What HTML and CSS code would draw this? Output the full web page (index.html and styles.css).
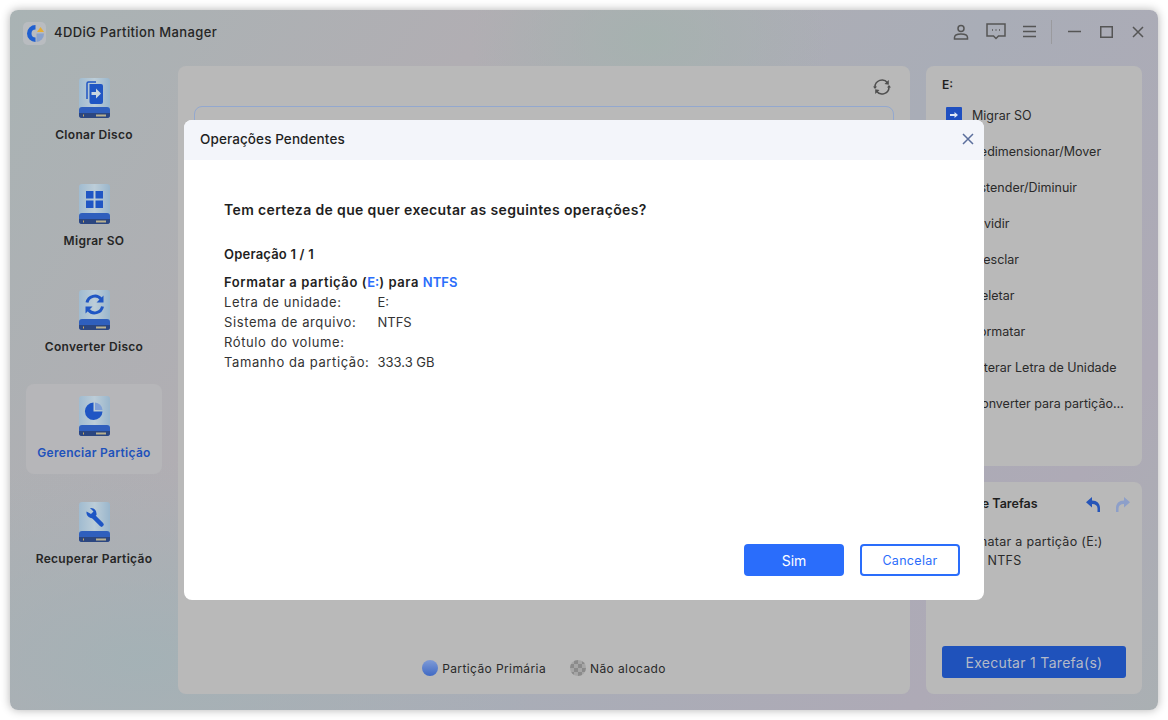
FILE: index.html
```html
<!DOCTYPE html>
<html lang="pt">
<head>
  <meta charset="UTF-8" />
  <title>4DDiG Partition Manager</title>
  <link rel="stylesheet" href="styles.css">
</head>
<body>
  <svg class="defs" width="0" height="0">
    <defs>
      <linearGradient id="diskBody" x1="0" x2="1" y1="0" y2="0">
        <stop offset="0" stop-color="#a0bbd0" />
        <stop offset="0.5" stop-color="#bccdd8" />
        <stop offset="1" stop-color="#9ab6cc" />
      </linearGradient>
      <symbol id="disk" viewBox="0 0 31 40">
        <rect width="31" height="36" rx="3" fill="url(#diskBody)" />
        <rect y="29" width="31" height="11" rx="3" fill="#2f5fbd" />
        <path d="M0 35h31v2a3 3 0 0 1-3 3H3a3 3 0 0 1-3-3z" fill="#2b4680" />
        <rect x="4" y="36.500" width="1" height="2" fill="#c9a860" />
        <rect x="17" y="36.500" width="10" height="2" fill="#b9b08e" />
      </symbol>
    </defs>
  </svg>

  <div class="window">
    <header class="titlebar">
      <div class="brand">
        <span class="logo">
          <svg width="23" height="23" viewBox="0 0 23 23">
            <path d="M12.500 3a8.500 8.500 0 1 0 0 17v-4.500a4 4 0 0 1 0-8z" fill="#1f5fd0" />
            <path d="M13.500 11.500H21a8.500 8.500 0 0 1-7.500 8.500z" fill="#8aa2cc" />
            <path d="M14 10l3.500-5 3.500 5z" fill="#e5ad35" />
          </svg>
        </span>
        <span class="app-name">4DDiG Partition Manager</span>
      </div>
      <div class="controls">
        <svg class="ctl ctl-user" width="16" height="16" viewBox="0 0 16 16"><circle cx="8" cy="4.500" r="3" /><path d="M1.500 15v-1.500c0-2 2-3.500 6.500-3.500s6.500 1.500 6.500 3.500V15z" /></svg>
        <svg class="ctl ctl-chat" width="20" height="17" viewBox="0 0 20 17"><path d="M1 1h18v12h-6.500L10 15.500 7.500 13H1z" /><path d="M6 7h1M9.500 7h1M13 7h1" /></svg>
        <svg class="ctl ctl-menu" width="13" height="13" viewBox="0 0 13 13"><path d="M0 1.500h13M0 6.500h13M0 11.500h13" /></svg>
        <span class="divider"></span>
        <svg class="ctl ctl-min" width="13" height="13" viewBox="0 0 13 13"><path d="M0 6.500h13" /></svg>
        <svg class="ctl ctl-max" width="13" height="12" viewBox="0 0 13 12"><rect x="0.750" y="0.750" width="11.500" height="10.500" /></svg>
        <svg class="ctl ctl-close" width="12" height="12" viewBox="0 0 12 12"><path d="M1 1l10 10M11 1L1 11" /></svg>
      </div>
    </header>

    <div class="content">
      <nav class="sidebar">
        <a class="nav-item">
          <svg class="disk" width="31" height="40" viewBox="0 0 31 40">
            <use href="#disk" width="31" height="40" />
            <path d="M8 21V5.500A1.500 1.500 0 0 1 9.500 4H17" fill="none" stroke="#1f56c4" stroke-width="1.500" />
            <path d="M10.500 6H22a2 2 0 0 1 2 2v16a2 2 0 0 1-2 2H12.500a2 2 0 0 1-2-2z" fill="#1f56c4" />
            <path d="M12.500 14h4.500v-3.500l5 5-5 5V17h-4.500z" fill="#c9d6e0" />
          </svg>
          <span>Clonar Disco</span>
        </a>
        <a class="nav-item">
          <svg class="disk" width="31" height="40" viewBox="0 0 31 40">
            <use href="#disk" width="31" height="40" />
            <path d="M7 7h7.500v7.500H7zM16.500 7H24v7.500h-7.500zM7 16.500h7.500V24H7zM16.500 16.500H24V24h-7.500z" fill="#1f56c4" />
          </svg>
          <span>Migrar SO</span>
        </a>
        <a class="nav-item">
          <svg class="disk" width="31" height="40" viewBox="0 0 31 40">
            <use href="#disk" width="31" height="40" />
            <path d="M8 12.500a8 8 0 0 1 14-3.500M23.500 16.500a8 8 0 0 1-14 3.500" fill="none" stroke="#1f56c4" stroke-width="3" />
            <path d="M24.500 5.500v7h-7zM6.500 23.500v-7h7z" fill="#1f56c4" />
          </svg>
          <span>Converter Disco</span>
        </a>
        <a class="nav-item active">
          <svg class="disk" width="31" height="40" viewBox="0 0 31 40">
            <use href="#disk" width="31" height="40" />
            <path d="M14.500 6.500v9h9a8.800 8.800 0 1 1-9-9z" fill="#1f56c4" />
            <path d="M16 6.500a8 8 0 0 1 7.500 7.500H16z" fill="#7f9fd6" />
          </svg>
          <span>Gerenciar Partição</span>
        </a>
        <a class="nav-item">
          <svg class="disk" width="31" height="40" viewBox="0 0 31 40">
            <use href="#disk" width="31" height="40" />
            <path d="M14 14l8.500 8.500" fill="none" stroke="#1f56c4" stroke-width="4.500" stroke-linecap="round" />
            <path d="M11 6l3.500 3.500-2.500 2.500-4.500-2.500c-.5 4 2.500 7.500 7 6.500l3-3c.5-4-2-7.500-6.500-7z" fill="#1f56c4" />
          </svg>
          <span>Recuperar Partição</span>
        </a>
      </nav>

      <main class="main-panel">
        <div class="main-top">
          <svg class="refresh" width="20" height="18" viewBox="0 0 20 18">
            <path d="M3 9a7 7 0 0 1 12.500-4.300M17 9a7 7 0 0 1-12.500 4.300" />
            <path class="tip" d="M16.800 2v4.800l-4.300-.8zM3.200 16v-4.800l4.300.8zM1 8.500h4L3 11zM15 9.500h4L17 7z" />
          </svg>
        </div>
        <div class="disk-box"></div>
        <div class="legend">
          <span class="legend-item"><i class="dot dot-primary"></i>Partição Primária</span>
          <span class="legend-item"><i class="dot dot-free"></i>Não alocado</span>
        </div>
      </main>

      <aside class="side">
        <section class="actions">
          <h3>E:</h3>
          <ul>
            <li><svg width="16" height="16" viewBox="0 0 16 16"><rect width="16" height="16" rx="1" fill="#1f4fc0" /><path d="M4 7h4.500V5l3.500 3-3.500 3V9H4z" fill="#dfe7f5" /></svg>Migrar SO</li>
            <li><i></i>Redimensionar/Mover</li>
            <li><i></i>Estender/Diminuir</li>
            <li><i></i>Dividir</li>
            <li><i></i>Mesclar</li>
            <li><i></i>Deletar</li>
            <li><i></i>Formatar</li>
            <li><i></i>Alterar Letra de Unidade</li>
            <li><i></i>Converter para partição…</li>
          </ul>
        </section>
        <section class="tasks">
          <div class="tasks-head">
            <h3>Lista de Tarefas</h3>
            <svg class="undo" width="14" height="15" viewBox="0 0 14 15"><path d="M6 0v3.500c5 0 8 3 8 7.500v4h-2.500v-3.500C11.500 8.500 9.500 7 6 7v3.500L0 5.200z" /></svg>
            <svg class="redo" width="14" height="15" viewBox="0 0 14 15"><path d="M8 0v3.500C3 3.500 0 6.500 0 11v4h2.500v-3.500C2.500 8.500 4.500 7 8 7v3.500l6-5.300z" /></svg>
          </div>
          <p class="task-text">Formatar a partição (E:)<br>para NTFS</p>
          <button class="run-btn">Executar 1 Tarefa(s)</button>
        </section>
      </aside>
    </div>

    <!-- pending operations dialog -->
    <div class="modal">
      <div class="modal-head">
        <span>Operações Pendentes</span>
        <svg width="12" height="12" viewBox="0 0 12 12"><path d="M1 1l10 10M11 1L1 11" /></svg>
      </div>
      <div class="modal-body">
        <p class="question">Tem certeza de que quer executar as seguintes operações?</p>
        <p class="op-count">Operação 1 / 1</p>
        <p class="op-title">Formatar a partição (<b>E:</b>) para <b>NTFS</b></p>
        <dl class="op-info">
          <dt>Letra de unidade:</dt><dd>E:</dd>
          <dt>Sistema de arquivo:</dt><dd>NTFS</dd>
          <dt>Rótulo do volume:</dt><dd></dd>
          <dt>Tamanho da partição:</dt><dd>333.3 GB</dd>
        </dl>
      </div>
      <div class="modal-foot">
        <button class="btn btn-primary">Sim</button>
        <button class="btn btn-outline">Cancelar</button>
      </div>
    </div>
  </div>
</body>
</html>
```

FILE: styles.css
```css
:root {
  --blue: #2a6dfb;
  --dim-blue: #1f52bb;
  --ink: #1f1f1f;
  --panel: #b9b9b9;
}

* {
  box-sizing: border-box;
  margin: 0;
  padding: 0;
}

body {
  font-family: Inter, "Open Sans", sans-serif;
  background: #fff;
  color: var(--ink);
  width: 1168px;
  height: 720px;
  padding: 10px;
  overflow: hidden;
}

.defs {
  position: absolute;
}

.window {
  position: relative;
  height: 700px;
  border-radius: 8px;
  display: flex;
  flex-direction: column;
  box-shadow: 0 0 10px rgba(0, 0, 0, 0.3);
  background:
    radial-gradient(ellipse 180px 120px at 640px 30px, rgba(165, 178, 175, 0.9), rgba(165, 178, 175, 0)),
    radial-gradient(ellipse 400px 200px at 130px 650px, rgba(163, 178, 182, 0.9), rgba(163, 178, 182, 0)),
    linear-gradient(125deg, #a9b3b4 0%, #b1aeb3 30%, #a9adb7 60%, #aeaab6 85%, #aab0b3 100%);
}

.titlebar {
  height: 56px;
  flex: none;
  display: flex;
  align-items: center;
  justify-content: space-between;
  padding: 0 14px 13px 13px;
}

.brand {
  display: flex;
  align-items: center;
  gap: 8px;
}

.logo {
  width: 23px;
  height: 23px;
  margin-top: 3px;
  border-radius: 5px;
  background: #b9bcc0;
  display: block;
}

.logo svg {
  display: block;
}

.app-name {
  font-size: 13px;
  font-weight: 500;
  letter-spacing: 0.38px;
  color: #262626;
}

.controls {
  display: flex;
  align-items: center;
}

.ctl {
  fill: none;
  stroke: #555;
  stroke-width: 1.500;
}

.ctl-user { margin-right: 17px; }
.ctl-chat { margin-right: 17px; }
.ctl-menu { margin-right: 15px; }
.ctl-min { margin-right: 19px; }
.ctl-max { margin-right: 19px; }

.divider {
  width: 1px;
  height: 24px;
  background: #9a9a9e;
  margin-right: 16px;
}

.content {
  flex: 1;
  display: flex;
  gap: 16px;
  padding: 0 16px 16px;
  min-height: 0;
}

.sidebar {
  width: 136px;
  flex: none;
  display: flex;
  flex-direction: column;
  gap: 16px;
}

.nav-item {
  height: 90px;
  border-radius: 8px;
  padding-top: 12px;
  display: flex;
  flex-direction: column;
  align-items: center;
  gap: 9px;
  font-size: 12px;
  font-weight: 600;
  line-height: 16px;
  letter-spacing: 0.3px;
  color: #262626;
}

.nav-item.active {
  background: #b6b6b9;
  color: var(--dim-blue);
}

.disk {
  display: block;
}

.main-panel {
  flex: 1;
  background: var(--panel);
  border-radius: 8px;
  padding: 12px 16px;
  display: flex;
  flex-direction: column;
}

.main-top {
  display: flex;
  justify-content: flex-end;
  height: 28px;
}

.refresh {
  margin-right: 2px;
  fill: none;
  stroke: #4f4f4f;
  stroke-width: 1.500;
}

.refresh .tip {
  fill: #4f4f4f;
  stroke: none;
}

.disk-box {
  height: 120px;
  border: 1px solid #93a8cf;
  border-radius: 8px;
}

.legend {
  margin-top: auto;
  margin-bottom: 3px;
  height: 22px;
  display: flex;
  justify-content: center;
  align-items: center;
  gap: 24px;
  font-size: 12px;
  letter-spacing: 0.4px;
  color: #2a2a2a;
}

.legend-item {
  display: flex;
  align-items: center;
  gap: 4px;
}

.dot {
  width: 16px;
  height: 16px;
  border-radius: 50%;
  display: block;
}

.dot-primary {
  background: linear-gradient(#7f9bd6, #3f69c4);
}

.dot-free {
  background: repeating-conic-gradient(#8b8b8b 0 25%, #a6a6a6 0 50%) 0 0 / 8px 8px;
}

.side {
  width: 216px;
  flex: none;
  display: flex;
  flex-direction: column;
  gap: 16px;
}

.actions,
.tasks {
  background: var(--panel);
  border-radius: 8px;
}

.actions {
  height: 400px;
  padding: 11px 16px;
}

.side h3 {
  font-size: 12px;
  font-weight: 600;
  line-height: 16px;
}

.actions ul {
  list-style: none;
  margin-top: 4px;
}

.actions li {
  height: 36px;
  display: flex;
  align-items: center;
  gap: 10px;
  font-size: 12.500px;
  color: #2a2a2a;
  white-space: nowrap;
  padding-left: 4px;
}

.actions li svg,
.actions li i {
  width: 16px;
  height: 16px;
  flex: none;
}

.tasks {
  flex: 1;
  padding: 14px 16px 16px;
  display: flex;
  flex-direction: column;
}

.tasks-head {
  display: flex;
  align-items: center;
}

.tasks-head h3 {
  flex: 1;
  font-size: 12.500px;
}

.undo {
  fill: #2655b8;
  margin-right: 16px;
}

.redo {
  fill: #8d9fc9;
  margin-right: -4px;
}

.task-text {
  margin-top: 20px;
  padding-left: 14px;
  font-size: 12.500px;
  letter-spacing: 0.3px;
  line-height: 19px;
  color: #2a2a2a;
}

.run-btn {
  margin-top: auto;
  height: 32px;
  border: none;
  border-radius: 3px;
  background: var(--dim-blue);
  color: #b4bac8;
  font-family: inherit;
  font-size: 14px;
  letter-spacing: 0.3px;
}

.modal {
  position: absolute;
  left: 174px;
  top: 110px;
  width: 800px;
  height: 480px;
  background: #fff;
  border-radius: 8px;
  overflow: hidden;
  display: flex;
  flex-direction: column;
}

.modal-head {
  height: 40px;
  flex: none;
  background: #f3f5fa;
  display: flex;
  align-items: center;
  justify-content: space-between;
  padding: 0 10px 2px 16px;
  font-size: 13.500px;
  font-weight: 500;
  letter-spacing: 0.1px;
}

.modal-head svg {
  fill: none;
  stroke: #5b6f9c;
  stroke-width: 1.500;
}

.modal-body {
  flex: 1;
  padding: 40px 40px 0;
  font-size: 13px;
  line-height: 20px;
  letter-spacing: 0.6px;
  color: #333;
}

.question {
  font-size: 14px;
  font-weight: 600;
  letter-spacing: 0.36px;
  color: var(--ink);
}

.op-count {
  margin-top: 24px;
  font-weight: 600;
  letter-spacing: 0.2px;
  color: var(--ink);
}

.op-title {
  margin-top: 8px;
  font-weight: 600;
  letter-spacing: 0.57px;
  color: var(--ink);
}

.op-title b {
  font-weight: 600;
  letter-spacing: 0;
  color: var(--blue);
}

.op-info {
  display: grid;
  grid-template-columns: max-content 1fr;
  column-gap: 8px;
}

.op-info dd {
  letter-spacing: 0;
}

.modal-foot {
  display: flex;
  justify-content: flex-end;
  gap: 16px;
  padding: 0 24px 24px;
}

.btn {
  width: 100px;
  height: 32px;
  border-radius: 4px;
  font-family: inherit;
}

.btn-primary {
  border: none;
  background: var(--blue);
  color: #fff;
  font-size: 14px;
}

.btn-outline {
  border: 2px solid var(--blue);
  background: #fff;
  color: var(--blue);
  font-size: 12.500px;
  letter-spacing: 0.3px;
}
```
